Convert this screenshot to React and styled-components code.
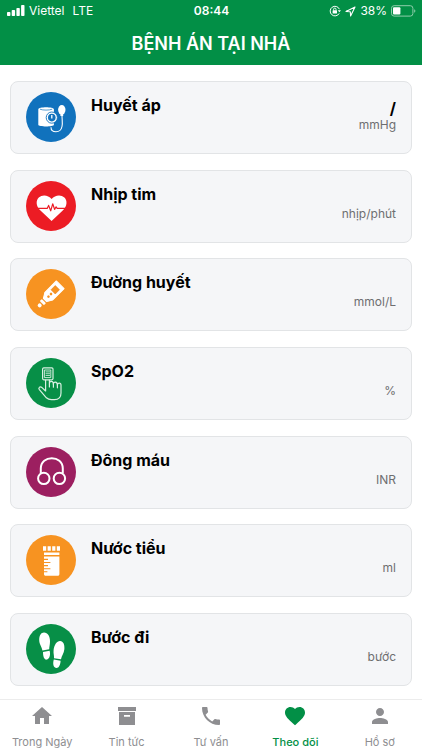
import React from 'react';
import styled, { createGlobalStyle } from 'styled-components';
import { MdHome, MdPhone, MdFavorite, MdPerson } from 'react-icons/md';

const GlobalStyle = createGlobalStyle`
  *, *::before, *::after { box-sizing: border-box; }
  body { margin: 0; background: #fff; font-family: Inter, "Noto Sans", sans-serif; }
`;

const Screen = styled.div`
  min-height: 100vh;
  display: flex;
  flex-direction: column;
`;

const Header = styled.header`
  background: #028f46;
  color: #fff;
  padding-bottom: 8px;
`;

const StatusBar = styled.div`
  display: grid;
  grid-template-columns: 1fr auto 1fr;
  align-items: center;
  height: 22px;
  padding: 0 6px 0 7px;
  font-size: 12px;
  line-height: 16px;
`;

const StatusGroup = styled.div`
  display: flex;
  align-items: center;
  justify-content: ${(p) => (p.$end ? 'flex-end' : 'flex-start')};
  gap: 4px;
`;

const Network = styled.span`
  padding-left: 4px;
`;

const Clock = styled.time`
  font-size: 12px;
  font-weight: 600;
`;

const Title = styled.h1`
  margin: 0;
  padding-top: 9px;
  text-align: center;
  font-size: 18px;
  line-height: 26px;
  font-weight: 600;
`;

const List = styled.ul`
  flex: 1;
  display: flex;
  flex-direction: column;
  justify-content: space-between;
  gap: 12px;
  margin: 0;
  padding: 16px 10px 13px;
  list-style: none;
`;

const Card = styled.li`
  display: flex;
  align-items: flex-start;
  gap: 15px;
  height: 73px;
  padding: 10px 15px;
  background: #f5f6f8;
  border: 1px solid #e2e4e6;
  border-radius: 8px;
`;

const Badge = styled.svg`
  flex: none;
  width: 50px;
  height: 50px;
`;

const Name = styled.h2`
  flex: 1;
  margin: 0;
  padding-top: 2px;
  font-size: 16px;
  line-height: 22px;
  font-weight: 700;
  color: #000;
`;

const Reading = styled.div`
  display: flex;
  flex-direction: column;
  align-items: flex-end;
  padding-top: 7px;
`;

const Value = styled.strong`
  height: 18px;
  font-size: 16px;
  line-height: 18px;
  font-weight: 700;
  color: #000;
`;

const Unit = styled.span`
  font-size: 12px;
  line-height: 16px;
  color: #6e6e70;
`;

const TabBar = styled.nav`
  display: grid;
  grid-template-columns: repeat(5, 1fr);
  height: 51px;
  border-top: 1px solid #ececec;
  background: #fff;
`;

const Tab = styled.button`
  display: flex;
  flex-direction: column;
  align-items: center;
  gap: 6px;
  padding: 4px 0 0;
  border: 0;
  background: none;
  font-family: inherit;
  font-size: 11px;
  line-height: 16px;
  font-weight: ${(p) => (p.$active ? 500 : 400)};
  color: ${(p) => (p.$active ? '#028f46' : '#8e8e91')};
  white-space: nowrap;

  svg { display: block; width: 24px; height: 24px; }
`;

const SignalIcon = () => (
  <svg width="18" height="12" viewBox="0 0 18 12" fill="#fff" aria-hidden="true">
    <rect x="0" y="7" width="3.4" height="4" rx="0.8" />
    <rect x="4.7" y="5" width="3.4" height="6" rx="0.8" />
    <rect x="9.4" y="3" width="3.4" height="8" rx="0.8" />
    <rect x="14.1" y="0" width="3.4" height="11" rx="0.8" />
  </svg>
);

const RotationLockIcon = () => (
  <svg width="12" height="12" viewBox="0 0 12 12" fill="none" stroke="#fff" aria-hidden="true">
    <path d="M10.2 8.4A4.8 4.8 0 1 1 10.4 4.2" />
    <path d="M8.8 5.2h3.2l-1.6 2z" fill="#fff" stroke="none" />
    <rect x="3.6" y="5.2" width="4.4" height="3.4" rx=".5" fill="#fff" stroke="none" />
    <path d="M4.6 5.4V4.3a1.2 1.2 0 0 1 2.4 0v1.1" strokeWidth=".9" />
  </svg>
);

const LocationIcon = () => (
  <svg width="11" height="11" viewBox="0 0 11 11" fill="none" stroke="#fff" strokeWidth="1.1" strokeLinejoin="round" aria-hidden="true">
    <path d="M10 1 1 5.4l4.3.3.3 4.3z" />
  </svg>
);

const BatteryIcon = () => (
  <svg width="25" height="12" viewBox="0 0 25 12" aria-hidden="true">
    <rect x=".5" y=".7" width="21.4" height="10.4" rx="2.6" fill="none" stroke="#8fcdab" />
    <rect x="2" y="2.2" width="7.4" height="7.4" rx="1" fill="#fff" />
    <path d="M23.2 4.2c1.6.6 1.6 3 0 3.6z" fill="#8fcdab" />
  </svg>
);

const PressureArt = () => (
  <g fill="#fff">
    <path d="M12.3 17.3c0-2.8 15.6-2.8 15.6 0v15.5c0 2.2-15.6 2.2-15.6 0z" />
    <path d="M14 17.2c3 1.2 9 1.2 12.2 0" fill="none" stroke="#1172bd" strokeWidth=".7" />
    <circle cx="25.8" cy="25.6" r="5.6" stroke="#1172bd" strokeWidth=".9" />
    <circle cx="25.8" cy="25.6" r="3.8" fill="#1172bd" />
    <path d="M25.8 23v3.4" stroke="#fff" strokeWidth="1.3" />
    <ellipse cx="35.8" cy="17.8" rx="3.7" ry="4.8" />
    <path d="M34.4 21h2.8v3h-2.8z" />
    <path d="M36 23.5c0 4 .8 7.5 0 11-.8 3.700-3 5.300-6 5.300s-5-1.600-5-4.600" fill="none" stroke="#fff" strokeWidth="1.1" />
  </g>
);

const HeartArt = () => (
  <>
    <path d="M25.600 39.900 14.200 29.300C10 25 9.600 19.600 12.800 16.500c3.600-3.400 9.600-2.500 12.800 1.600 3.200-4.100 9.200-5 12.800-1.600 3.200 3.100 2.800 8.500-1.400 12.800z" fill="#fff" />
    <path d="M10 27.400h11.200l1.400-3 2.100 5.400 2-7 1.900 5.600 1.500-2.600 1 1.600H41" fill="none" stroke="#ec1c24" strokeWidth="1.2" strokeLinejoin="round" />
  </>
);

const MeterArt = () => (
  <g transform="rotate(45 25 25)">
    <path d="M19.500 12h11v16l-3.200 5.500h-4.600L19.500 28z" fill="#fff" stroke="#fff" strokeLinejoin="round" />
    <rect x="22" y="16" width="6" height="6" fill="#f79321" stroke="#e07c15" strokeWidth=".5" />
    <circle cx="25" cy="25" r="1.300" fill="#f79321" />
    <circle cx="25" cy="28.600" r="1.300" fill="#f79321" />
    <rect x="22" y="35" width="6" height="3" rx="1" fill="#fff" />
    <circle cx="25" cy="41" r="2" fill="#fff" />
  </g>
);

const OximeterArt = () => (
  <g fill="none" stroke="#d9f0e2" strokeWidth="1.2" strokeLinejoin="round" strokeLinecap="round">
    <rect x="16.600" y="9.800" width="10.400" height="12" rx="1.2" />
    <rect x="18.800" y="12" width="6" height="7.600" strokeWidth=".9" />
    <path d="M20 13.900h3.600M20 15.700h3.600M20 17.500h3.600" strokeWidth=".8" />
    <path d="M19.600 22v11l-3.600-3.400c-2.200-1.500-4 .2-2.600 2l7 8.200c1.400 1.300 3 1.800 5 1.800h3c4 0 6.600-2.600 6.600-6.600v-8c0-2.600-3.600-2.600-3.600 0 0-3.800-4-3.800-4-.8 0-3.800-4-3.800-4-.4V22" />
    <path d="M23.400 26v3M27.400 26.200v3M31.400 27v2.800" />
  </g>
);

const ClotArt = () => (
  <g fill="none" stroke="#fff" strokeWidth="2">
    <circle cx="17.800" cy="31.400" r="5.700" />
    <circle cx="33.400" cy="31.400" r="5.700" />
    <path d="M14.800 26.200v-4.600c0-13.800 22-13.800 22 0v4.600" />
  </g>
);

const UrineArt = () => (
  <>
    <path d="M17 11.300h3.200v4.400H17zM21.600 11.300h3.200v4.400h-3.200zM26.200 11.300h3.200v4.400h-3.200zM30.800 11.300H34v4.400h-3.200zM18 17.400h15.400v2.600H18zM18 21.400h15.400v17.600c0 1.200-.6 1.800-1.800 1.800H19.800c-1.200 0-1.800-.6-1.800-1.800z" fill="#fff" />
    <path d="M17 24.400h5M17 27.500h7.400M17 30.600h5M17 33.700h7.400M17 36.800h4.400" stroke="#f79321" strokeWidth="1.100" />
  </>
);

const StepsArt = () => (
  <g fill="#fff">
    <path d="M16.400 26.400c-.4-3.200-3.200-6-3.200-10.600 0-4.400 2-7.200 4.800-7.200 3.800 0 6 3.800 6 8.600 0 3.800-.8 5.400-.8 8z" />
    <path d="M17 28l6.600-1.200c1.200 4-.2 8.400-2.800 8.800-2.600.4-3.800-3-3.800-7.600z" />
    <path d="M28 34.200c.2-3-.8-4.600-.4-8.200.6-5.200 3.400-9.200 6.600-9 3 .2 4.600 3.400 4.200 8-.4 4.400-2.800 6.800-3.400 10.200z" />
    <path d="M27.800 35.600l6.800 1.200c-.2 4.200-1.800 7.600-4.600 7.200-2.600-.4-3.400-4.200-2.200-8.400z" />
  </g>
);

const ArchiveIcon = () => (
  <svg viewBox="0 0 24 24" fill="currentColor" aria-hidden="true">
    <path d="M3 3h18v4H3z" />
    <path fillRule="evenodd" d="M4 8h16v13H4zM9 11v1.700h6V11z" />
  </svg>
);

const metrics = [
  { name: 'Huyết áp', unit: 'mmHg', value: '/', color: '#1172bd', Art: PressureArt },
  { name: 'Nhịp tim', unit: 'nhịp/phút', color: '#ec1c24', Art: HeartArt },
  { name: 'Đường huyết', unit: 'mmol/L', color: '#f79321', Art: MeterArt },
  { name: 'SpO2', unit: '%', color: '#078f47', Art: OximeterArt },
  { name: 'Đông máu', unit: 'INR', color: '#9c1f60', Art: ClotArt },
  { name: 'Nước tiểu', unit: 'ml', color: '#f79321', Art: UrineArt },
  { name: 'Bước đi', unit: 'bước', color: '#078f47', Art: StepsArt },
];

const tabs = [
  { label: 'Trong Ngày', Icon: MdHome },
  { label: 'Tin tức', Icon: ArchiveIcon },
  { label: 'Tư vấn', Icon: MdPhone },
  { label: 'Theo dõi', Icon: MdFavorite, active: true },
  { label: 'Hồ sơ', Icon: MdPerson },
];

export default function App() {
  return (
    <Screen>
      <GlobalStyle />
      <Header>
        <StatusBar>
          <StatusGroup>
            <SignalIcon />
            <span>Viettel</span>
            <Network>LTE</Network>
          </StatusGroup>
          <Clock>08:44</Clock>
          <StatusGroup $end>
            <RotationLockIcon />
            <LocationIcon />
            <span>38%</span>
            <BatteryIcon />
          </StatusGroup>
        </StatusBar>
        <Title>BỆNH ÁN TẠI NHÀ</Title>
      </Header>
      <List>
        {metrics.map(({ name, unit, value, color, Art }) => (
          <Card key={name}>
            <Badge viewBox="0 0 50 50" aria-hidden="true">
              <circle cx="25" cy="25" r="25" fill={color} />
              <Art />
            </Badge>
            <Name>{name}</Name>
            <Reading>
              <Value>{value}</Value>
              <Unit>{unit}</Unit>
            </Reading>
          </Card>
        ))}
      </List>
      <TabBar>
        {tabs.map(({ label, Icon, active }) => (
          <Tab key={label} type="button" $active={active} aria-current={active ? 'page' : undefined}>
            <Icon />
            {label}
          </Tab>
        ))}
      </TabBar>
    </Screen>
  );
}
